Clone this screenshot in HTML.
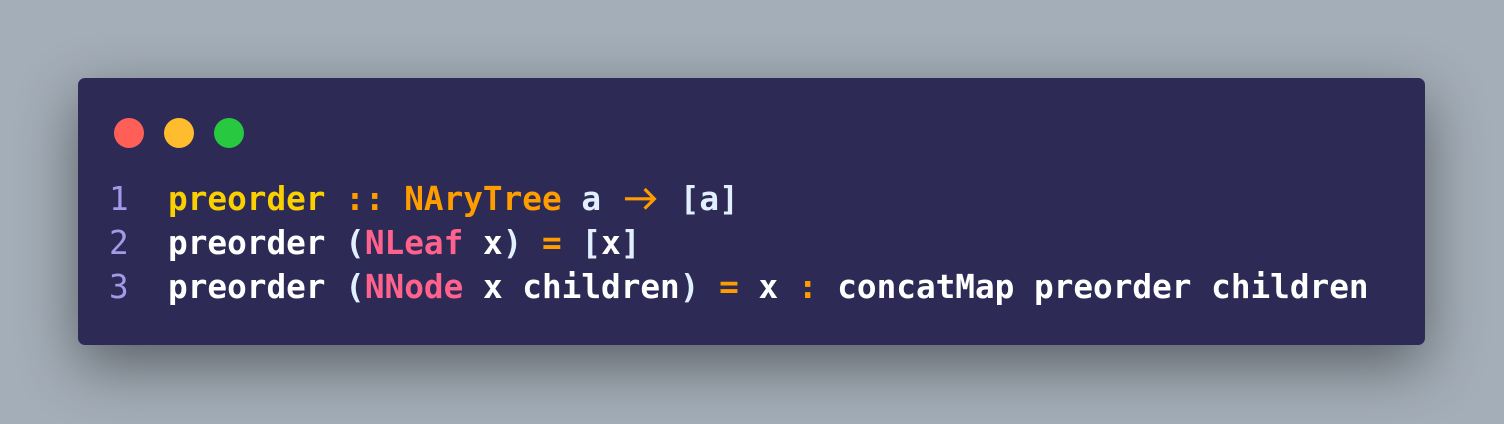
<!DOCTYPE html>
<html><head><style>
html,body{margin:0;padding:0;}
body{width:1504px;height:424px;background:#a4aeb8;position:relative;overflow:hidden;}
.card{position:absolute;left:78px;top:78px;width:1347px;height:267px;background:#2d2b55;border-radius:7px;box-shadow:0 20px 60px rgba(0,0,0,0.45);}
.dot{position:absolute;top:118px;width:30px;height:30px;border-radius:50%;}
pre{position:absolute;left:109px;top:177px;margin:0;font-family:"DejaVu Sans Mono","Liberation Mono",monospace;font-size:32.7px;font-weight:bold;line-height:44px;color:#fff;}
.n{color:#a599e9;font-weight:normal}.y{color:#fad000}.o{color:#ff9d00}.p{color:#ff628c}.l{color:#e1efff}
.arr{display:inline-block;width:2ch;height:1em;vertical-align:-0.15em;}
</style></head><body>
<div class="card"></div>
<div class="dot" style="left:114px;background:#ff5f57"></div>
<div class="dot" style="left:164px;background:#febc2e"></div>
<div class="dot" style="left:214px;background:#28c840"></div>
<pre><span class="n">1</span>  <span class="y">preorder</span> <span class="o">::</span> <span class="o">NAryTree</span> <span class="l">a</span> <svg class="arr" viewBox="0 0 40 33"><path d="M4 17H34M24 7L34 17L24 27" fill="none" stroke="#ff9d00" stroke-width="3.2"/></svg> <span class="l">[a]</span>
<span class="n">2</span>  preorder <span class="l">(</span><span class="p">NLeaf</span> x<span class="l">)</span> <span class="o">=</span> <span class="l">[</span>x<span class="l">]</span>
<span class="n">3</span>  preorder <span class="l">(</span><span class="p">NNode</span> x children<span class="l">)</span> <span class="o">=</span> x <span class="o">:</span> concatMap preorder children</pre>
</body></html>
